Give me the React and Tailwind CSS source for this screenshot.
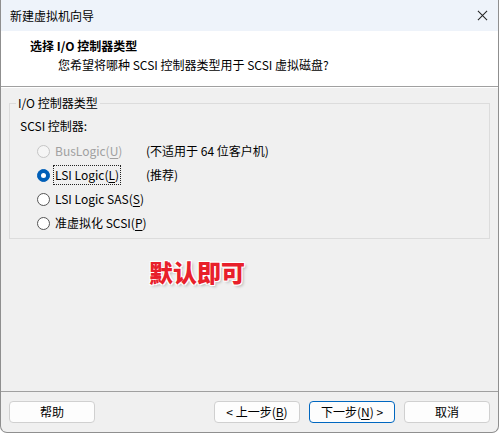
import React from 'react';

const font = { fontFamily: '"Noto Sans CJK SC", "Noto Sans", sans-serif' };

const Radio = ({ checked, disabled }) => (
  <span
    className={`w-[13px] h-[13px] rounded-full flex items-center justify-center shrink-0 ${
      checked
        ? 'bg-[#005fb8] border border-[#005fb8]'
        : disabled
        ? 'border border-[#c5c5c5] bg-[#f5f5f5]'
        : 'border border-[#555] bg-white'
    }`}
  >
    {checked && <span className="w-[5px] h-[5px] rounded-full bg-white" />}
  </span>
);

const Option = ({ label, mnemonic, checked, disabled, focus, note }) => (
  <div className="flex items-center h-[24px] pl-[35px]">
    <Radio checked={checked} disabled={disabled} />
    <span
      className={`ml-[3px] px-[1px] leading-[18px] ${disabled ? 'text-[#a0a0a0]' : 'text-[#000]'} ${
        focus ? 'border border-dotted border-[#222]' : 'border border-transparent'
      }`}
    >
      {label}(<span className="underline underline-offset-2">{mnemonic}</span>)
    </span>
    {note && <span className="absolute left-[144px] text-black">{note}</span>}
  </div>
);

const Btn = ({ children, primary }) => (
  <button
    className={`w-[86px] h-[22px] rounded-[4px] bg-[#fdfdfd] text-[12px] text-black flex items-center justify-center ${
      primary ? 'border border-[#0067c0]' : 'border border-[#d0d0d0]'
    }`}
  >
    {children}
  </button>
);

export default function App() {
  return (
    <div
      className="w-[499px] h-[433px] bg-[#f0f0f0] border-l border-r border-b border-[#8f8f8f] rounded-b-[7px] overflow-hidden flex flex-col text-[12px] text-black select-none"
      style={font}
    >
      {/* title bar */}
      <div className="h-[31px] bg-[#eef3fa] flex items-center justify-between pl-[9px] pr-[10px]">
        <span className="text-[12px]">新建虚拟机向导</span>
        <svg width="11" height="11" viewBox="0 0 12 12">
          <path d="M1 1 L11 11 M11 1 L1 11" stroke="#222" strokeWidth="1.1" />
        </svg>
      </div>

      {/* header */}
      <div className="h-[56px] bg-white border-b border-[#a0a0a0] pt-[6px] shrink-0">
        <div className="pl-[29px] font-bold leading-[18px]">选择 I/O 控制器类型</div>
        <div className="pl-[57px] leading-[18px] mt-[1px]">您希望将哪种 SCSI 控制器类型用于 SCSI 虚拟磁盘?</div>
      </div>
      <div className="h-[1px] bg-white" />

      {/* body */}
      <div className="flex-1 relative px-[8px] pt-[15px]">
        <div className="relative border border-[#dcdcdc] h-[136px] pt-[13px]">
          <span className="absolute -top-[10px] left-[6px] px-[2px] bg-[#f0f0f0] leading-[18px]">I/O 控制器类型</span>
          <div className="pl-[10px] leading-[18px]">SCSI 控制器:</div>
          <div className="mt-[4px] -ml-[8px] relative">
            <Option label="BusLogic" mnemonic="U" disabled note="(不适用于 64 位客户机)" />
            <Option label="LSI Logic" mnemonic="L" checked focus note="(推荐)" />
            <Option label="LSI Logic SAS" mnemonic="S" />
            <Option label="准虚拟化 SCSI" mnemonic="P" />
          </div>
        </div>

        <div
          className="mt-[19px] ml-[140px] text-[24px] font-black leading-[28px] text-[#e8202a]"
          style={{ textShadow: '0 0 2px #fff, 1px 1px 0 #fff, -1px -1px 0 #fff, 1px -1px 0 #fff, -1px 1px 0 #fff, 2px 2px 3px rgba(0,0,0,0.25)' }}
        >
          默认即可
        </div>
      </div>

      {/* footer */}
      <div className="h-[41px] border-t border-[#a0a0a0] flex items-start pt-[9px] px-[8px] shrink-0">
        <Btn>帮助</Btn>
        <div className="ml-auto flex gap-[9px]">
          <Btn>
            &lt; 上一步(<span className="underline underline-offset-2">B</span>)
          </Btn>
          <Btn primary>
            下一步(<span className="underline underline-offset-2">N</span>) &gt;
          </Btn>
          <Btn>取消</Btn>
        </div>
      </div>
    </div>
  );
}
